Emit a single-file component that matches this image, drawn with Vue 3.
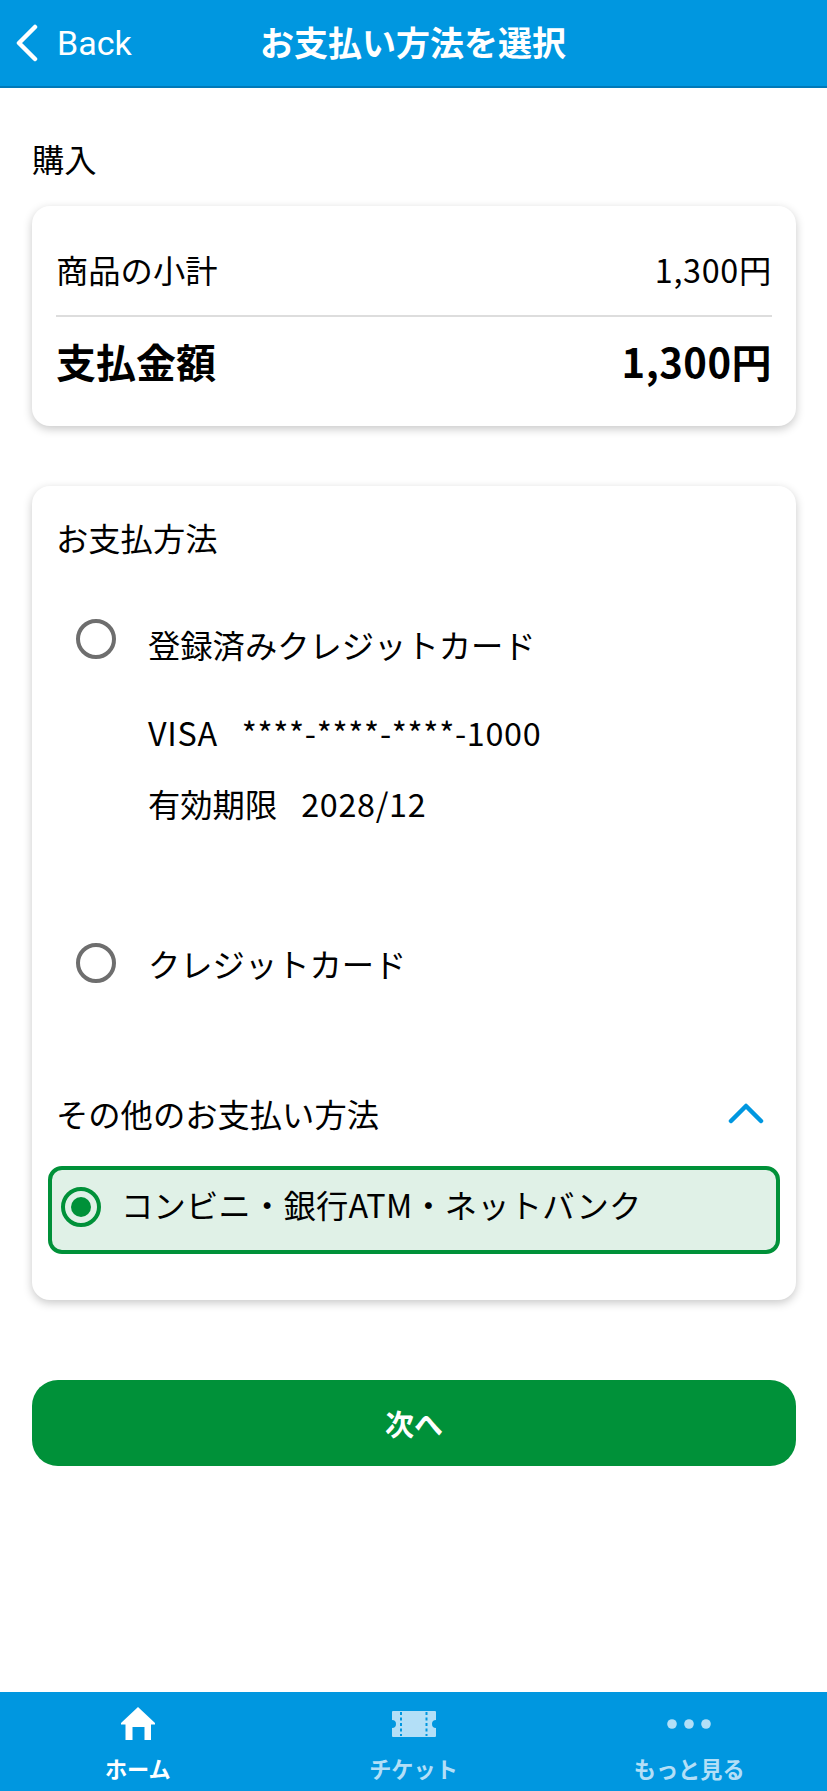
<script setup>
const tabs = [
  { name: 'ホーム', icon: 'home', active: true },
  { name: 'チケット', icon: 'ticket', active: false },
  { name: 'もっと見る', icon: 'more', active: false }
]
</script>

<template>
  <div class="page">
    <header class="topBar">
      <div class="back">
        <svg class="backIcon" width="24" height="38" viewBox="0 0 24 38">
          <path d="M20 3 L4 19 L20 35" fill="none" stroke="#fff" stroke-width="4.5" stroke-linecap="round" stroke-linejoin="round"/>
        </svg>
        <span>Back</span>
      </div>
      <div class="title">お支払い方法を選択</div>
    </header>

    <main class="content">
      <div class="sectionTitle">購入</div>
      <div class="card priceCard">
        <div class="priceRow subtotal">
          <span>商品の小計</span>
          <span class="num">1,300円</span>
        </div>
        <div class="priceRow total">
          <span>支払金額</span>
          <span class="numBold">1,300円</span>
        </div>
      </div>

      <div class="card payCard">
        <div class="payTitle">お支払方法</div>
        <div class="option">
          <span class="radio"></span>
          <div class="optionBody">
            <div class="optionName">登録済みクレジットカード</div>
            <div class="cardLine first"><span class="num">VISA</span><span class="num">****-****-****-1000</span></div>
            <div class="cardLine"><span>有効期限</span><span class="num">2028/12</span></div>
          </div>
        </div>
        <div class="option second">
          <span class="radio"></span>
          <div class="optionBody flat">
            <div class="optionName">クレジットカード</div>
          </div>
        </div>
        <div class="otherHead">
          <span>その他のお支払い方法</span>
          <svg width="36" height="22" viewBox="0 0 36 22">
            <path d="M3 19 L18 4 L33 19" fill="none" stroke="#0097e0" stroke-width="4.5" stroke-linecap="round" stroke-linejoin="round"/>
          </svg>
        </div>
        <div class="selected">
          <span class="radio on"><span class="dot"></span></span>
          <span class="selectedText">コンビニ・銀行ATM・ネットバンク</span>
        </div>
      </div>

      <button class="nextBtn">次へ</button>
    </main>

    <nav class="tabBar">
      <div v-for="tab in tabs" :key="tab.name" :class="tab.active ? 'tab active' : 'tab'">
        <svg v-if="tab.icon === 'home'" width="36" height="36" viewBox="0 0 36 36">
          <path d="M18 2 L35 18 L35 19.5 L31 19.5 L31 35 L24.5 35 L24.5 22 L12.5 22 L12.5 35 L5.5 35 L5.5 19.5 L1 19.5 L1 18 Z" fill="#fff"/>
        </svg>
        <svg v-if="tab.icon === 'ticket'" width="46" height="36" viewBox="0 0 46 36">
          <path d="M2 6 H44 a1 1 0 0 1 1 1 V15 a4 4 0 0 0 0 8 V31 a1 1 0 0 1 -1 1 H2 a1 1 0 0 1 -1 -1 V23 a4 4 0 0 0 0 -8 V7 a1 1 0 0 1 1 -1 Z" fill="#b3dff7"/>
          <path d="M10 7 V31 M35.5 7 V31" stroke="#0097e0" stroke-width="2" stroke-dasharray="3 2.5" fill="none"/>
        </svg>
        <svg v-if="tab.icon === 'more'" width="46" height="36" viewBox="0 0 46 36">
          <circle cx="6" cy="19" r="4.8" fill="#b3dff7"/>
          <circle cx="23" cy="19" r="4.8" fill="#b3dff7"/>
          <circle cx="40" cy="19" r="4.8" fill="#b3dff7"/>
        </svg>
        <span class="tabLabel">{{ tab.name }}</span>
      </div>
    </nav>
  </div>
</template>

<style>
html, body {
  margin: 0;
  background: #fff;
}
</style>

<style scoped>
.page {
  width: 827px;
  min-height: 1791px;
  display: flex;
  flex-direction: column;
  font-family: "Noto Sans CJK JP", "Noto Sans", sans-serif;
  color: #000;
  background: #fff;
}
.topBar {
  height: 86px;
  border-bottom: 2px solid #0079b8;
  background: #0097e0;
  color: #fff;
  display: flex;
  align-items: center;
  position: relative;
}
.back {
  display: flex;
  align-items: center;
  padding-left: 15px;
  font-family: Roboto, sans-serif;
  font-size: 34px;
  line-height: 44px;
}
.backIcon {
  margin-right: 18px;
}
.title {
  position: absolute;
  left: 260px;
  top: 20px;
  font-size: 34px;
  line-height: 44px;
  font-weight: 700;
}
.content {
  flex: 1;
  padding: 0 31px 0 32px;
}
.sectionTitle {
  margin-top: 48px;
  font-size: 32.3px;
  line-height: 44px;
}
.card {
  background: #fff;
  border-radius: 18px;
  box-shadow: 0 3px 10px rgba(0, 0, 0, 0.22);
}
.priceCard {
  margin-top: 26px;
  padding: 0 24px;
  height: 220px;
  box-sizing: border-box;
}
.priceRow {
  display: flex;
  justify-content: space-between;
  align-items: center;
}
.subtotal {
  height: 93px;
  padding-top: 16px;
  font-size: 32.3px;
  border-bottom: 2px solid #ddd;
}
.total {
  height: 88px;
  font-size: 40px;
  font-weight: 700;
}
.num {
  letter-spacing: 0.7px;
}
.numBold {
  letter-spacing: 0.5px;
}
.payCard {
  margin-top: 60px;
  height: 814px;
  box-sizing: border-box;
  padding: 29px 0 0;
}
.payTitle {
  padding-left: 24px;
  font-size: 32.3px;
  line-height: 44px;
}
.option {
  display: flex;
  padding-left: 44px;
  margin-top: 60px;
}
.option.second {
  margin-top: 118px;
}
.radio {
  flex: none;
  width: 40px;
  height: 40px;
  box-sizing: border-box;
  border: 4px solid #6e6e6e;
  border-radius: 50%;
  display: flex;
  align-items: center;
  justify-content: center;
}
.optionBody {
  margin-left: 32px;
  padding-top: 3px;
  font-size: 32.3px;
  line-height: 44px;
}
.optionBody.flat {
  padding-top: 0;
  margin-top: -2px;
}
.cardLine {
  display: flex;
  gap: 24px;
  margin-top: 27px;
  line-height: 44px;
}
.cardLine.first {
  margin-top: 44px;
}
.otherHead {
  display: flex;
  justify-content: space-between;
  align-items: center;
  margin-top: 106px;
  padding: 0 32px 0 24px;
  font-size: 32.3px;
  line-height: 44px;
}
.selected {
  margin: 31px 16px 0 16px;
  height: 88px;
  box-sizing: border-box;
  border: 4px solid #009139;
  border-radius: 14px;
  background: #e0f1e7;
  display: flex;
  align-items: center;
  padding-left: 9px;
  padding-bottom: 6px;
  gap: 20px;
  font-size: 32.3px;
}
.selectedText {
  margin-bottom: 7px;
  letter-spacing: 0.2px;
}
.radio.on {
  border-color: #009139;
}
.dot {
  width: 20px;
  height: 20px;
  border-radius: 50%;
  background: #009139;
}
.nextBtn {
  display: block;
  width: 100%;
  height: 86px;
  margin-top: 80px;
  border: none;
  border-radius: 26px;
  background: #009139;
  color: #fff;
  font-family: inherit;
  font-size: 29px;
  font-weight: 700;
}
.tabBar {
  height: 99px;
  background: #0097e0;
  display: flex;
}
.tab {
  flex: 1;
  display: flex;
  flex-direction: column;
  align-items: center;
  padding-top: 13px;
  color: #b3dff7;
}
.tab.active {
  color: #fff;
}
.tabLabel {
  margin-top: 11px;
  font-size: 22.2px;
  line-height: 32px;
  font-weight: 700;
}
</style>
